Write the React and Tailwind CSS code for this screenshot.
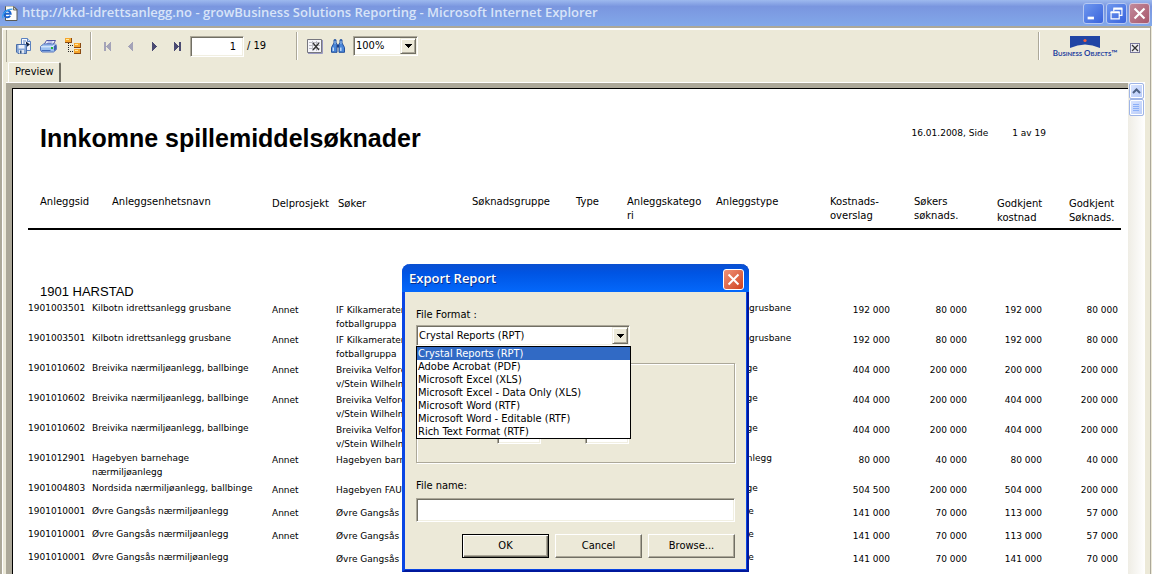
import { useState } from "react"

const formats = [
  "Crystal Reports (RPT)",
  "Adobe Acrobat (PDF)",
  "Microsoft Excel (XLS)",
  "Microsoft Excel - Data Only (XLS)",
  "Microsoft Word (RTF)",
  "Microsoft Word - Editable (RTF)",
  "Rich Text Format (RTF)",
]

const velforening = ["Breivika Velforening", "v/Stein Wilhelmsen"]

const tallRows = [
  ["1901003501", ["Kilbotn idrettsanlegg grusbane"], "Annet", ["IF Kilkameratene", "fotballgruppa"], "Fotball grusbane", "192 000", "80 000", "192 000", "80 000"],
  ["1901003501", ["Kilbotn idrettsanlegg grusbane"], "Annet", ["IF Kilkameratene", "fotballgruppa"], "Fotball grusbane", "192 000", "80 000", "192 000", "80 000"],
  ["1901010602", ["Breivika nærmiljøanlegg, ballbinge"], "Annet", velforening, "Ballbinge", "404 000", "200 000", "200 000", "200 000"],
  ["1901010602", ["Breivika nærmiljøanlegg, ballbinge"], "Annet", velforening, "Ballbinge", "404 000", "200 000", "404 000", "200 000"],
  ["1901010602", ["Breivika nærmiljøanlegg, ballbinge"], "", velforening, "Ballbinge", "404 000", "200 000", "404 000", "200 000"],
  ["1901012901", ["Hagebyen barnehage", "nærmiljøanlegg"], "Annet", ["Hagebyen barnehage"], "Skateanlegg", "80 000", "40 000", "80 000", "40 000"],
]

const shortRows = [
  ["1901004803", ["Nordsida nærmiljøanlegg, ballbinge"], "Annet", ["Hagebyen FAU"], "Ballbinge", "504 500", "200 000", "504 000", "200 000"],
  ["1901010001", ["Øvre Gangsås nærmiljøanlegg"], "Annet", ["Øvre Gangsås"], "Balløkke", "141 000", "70 000", "113 000", "57 000"],
  ["1901010001", ["Øvre Gangsås nærmiljøanlegg"], "Annet", ["Øvre Gangsås"], "Balløkke", "141 000", "70 000", "113 000", "57 000"],
  ["1901010001", ["Øvre Gangsås nærmiljøanlegg"], "", ["Øvre Gangsås"], "Balløkke", "141 000", "70 000", "141 000", "70 000"],
]

const sunken =
  "border border-t-[#aca899] border-l-[#aca899] border-r-white border-b-white bg-white " +
  "shadow-[inset_1px_1px_0_#716f64,inset_-1px_-1px_0_#f1efe2] outline-none "

function PageIcon() {
  return (
    <svg viewBox="0 0 16 17" width="16" height="17" aria-hidden="true">
      <path d="M3.500 1.500h8.500l3 3v11h-11.500z" fill="#fdfdfb" stroke="#5a5a55" />
      <path d="M4 1.500h8" stroke="#c4c4b4" />
      <path d="M11.500 1.500v3.500h3.500z" fill="#cfcfc6" stroke="#55554f" strokeWidth=".8" />
      <path d="M2.500 8.700h6.200a3.300 3.300 0 1 0-.5 2" fill="none" stroke="#1a63d0" strokeWidth="1.900" />
      <path d="M1.200 13.200C-1 10 4 4 10.500 4.200" fill="none" stroke="#38a0f4" strokeWidth="1.200" />
    </svg>
  )
}

function ExportIcon() {
  return (
    <svg viewBox="0 0 16 16" width="16" height="16" aria-hidden="true">
      <path d="M5.500.5h6l3 3v9h-9z" fill="#f4f7fd" stroke="#5b82c0" />
      <path d="M11.500.5v3h3" fill="#cfe0f7" stroke="#5b82c0" />
      <path d="M7 3h3M7 5h2" stroke="#5b82c0" />
      <path d="M10 3.500l4 3-4 3z" fill="#14233f" />
      <path d="M.5 6.500h10v9H2l-1.500-1.500z" fill="#86a6d6" stroke="#4a6ea8" />
      <path d="M2.500 7h6v3.500h-6z" fill="#eef3fb" />
      <path d="M3 12h5v3.500H3z" fill="#dfe6f0" />
      <path d="M4 12.500h1.500v3H4z" fill="#30517f" />
    </svg>
  )
}

function PrintIcon() {
  return (
    <svg viewBox="0 0 17 14" width="17" height="14" aria-hidden="true">
      <path d="M6.500 1.500h9l-3 5h-9z" fill="#f8faff" stroke="#4c4fa3" />
      <path d="M7.500 3h5M6.500 4.500h5" stroke="#7c86d0" />
      <path d="M.5 7.500L3.500 5h12l1 1.500v4l-3 2.500H2L.5 11.500z" fill="#9cc0f0" stroke="#5b79bd" />
      <path d="M1 7.800h11l3.500-2.300" fill="none" stroke="#e9f3ff" />
      <path d="M1.500 11.500h9" stroke="#3e68b8" />
      <path d="M11 8h2v2h-2z" fill="#24b53b" />
      <path d="M14 7l2-1.500v5L14 12z" fill="#3f5fae" />
    </svg>
  )
}

function TreeNode({ x, y }) {
  return (
    <g>
      <path d={`M${x} ${y}h7v5h-7z`} fill="#8a4a12" />
      <path d={`M${x} ${y}h6v4h-6z`} fill="#f6a62c" />
      <path d={`M${x + 1} ${y + 1}h3v1h-3z`} fill="#ffe9a0" />
    </g>
  )
}

function TreeIcon() {
  return (
    <svg viewBox="0 0 16 16" width="16" height="16" shapeRendering="crispEdges" aria-hidden="true">
      <path d="M3.500 5v10M3 7.500h6M3 13.500h6" fill="none" stroke="#222" strokeDasharray="1 1" />
      <TreeNode x={0} y={0} />
      <TreeNode x={9} y={5} />
      <TreeNode x={9} y={11} />
    </svg>
  )
}

function NavButton({ label, path, muted }) {
  return (
    <button type="button" aria-label={label} className={muted ? "text-[#a4a3b8]" : "text-[#4b4b72]"}>
      <svg viewBox="0 0 8 9" width="8" height="9" fill="currentColor" shapeRendering="crispEdges" aria-hidden="true">
        <path d={path} />
      </svg>
    </button>
  )
}

function StopIcon() {
  return (
    <svg viewBox="0 0 16 15" width="16" height="15" aria-hidden="true">
      <path d="M15.500 1v13.500H1" fill="none" stroke="#9a9ac4" />
      <path d="M.5.5h14v13H.5z" fill="#f6f6fa" stroke="#77777f" />
      <path d="M2 3.500h11M2 6.500h11M2 9.500h11M5.500 2v10M9.500 2v10" stroke="#bdbdc6" />
      <path d="M6 4l6 7M12 4l-6 7" stroke="#333" strokeWidth="1.300" />
    </svg>
  )
}

function FindIcon() {
  return (
    <svg viewBox="0 0 14 14" width="14" height="14" aria-hidden="true">
      <path d="M3 .8h2v2.500l1 2v8H.5V8.500L3 4zM9 .8h2V4l2.500 4.500v4.800H8v-8l1-2z" fill="#4a86d8" stroke="#234f9c" />
      <path d="M6 5.500h2v3H6z" fill="#1c3f86" />
      <path d="M2.300 8.500v3.500M9.800 8.500v3.500" stroke="#c4dcf8" strokeWidth="1.400" />
      <path d="M4 2v3M10 2v3" stroke="#9cc4f2" />
    </svg>
  )
}

function ArrowDown() {
  return (
    <svg viewBox="0 0 7 4" width="7" height="4" shapeRendering="crispEdges" aria-hidden="true">
      <path d="M0 0h7L3.500 4z" fill="#000" />
    </svg>
  )
}

function Combo({ className, ...props }) {
  return (
    <span className={"relative block " + className}>
      <select {...props} className={sunken + "h-full w-full appearance-none px-0.5 leading-4"} />
      <span className="pointer-events-none absolute top-0.5 right-0.5 bottom-0.5 flex w-4 items-center justify-center border border-t-[#f1efe2] border-l-[#f1efe2] border-r-[#716f64] border-b-[#716f64] bg-[#ece9d8] shadow-[inset_1px_1px_0_#fff,inset_-1px_-1px_0_#aca899]">
        <ArrowDown />
      </span>
    </span>
  )
}

function WindowButton({ label, className, children }) {
  return (
    <button
      type="button"
      aria-label={label}
      className={"flex size-[21px] items-center justify-center rounded-[3px] border text-white " + className}
    >
      <svg viewBox="0 0 21 21" width="19" height="19" fill="none" stroke="currentColor" aria-hidden="true">
        {children}
      </svg>
    </button>
  )
}

function TitleBar() {
  const blue = "border-[#b5c8f2] bg-linear-to-br from-[#6f97ee] to-[#3a62dc]"
  return (
    <header className="flex h-[26px] items-center bg-linear-to-b from-[#9db9ee] via-[#7a96df] via-25% to-[#82a8ea] pl-0.5">
      <PageIcon />
      <h1 className="ml-1 flex-1 truncate font-['Open_Sans'] text-[13px] font-semibold text-[#d8e4f8]">
        http://kkd-idrettsanlegg.no - growBusiness Solutions Reporting - Microsoft Internet Explorer
      </h1>
      <div className="flex gap-0.5 pr-0.5">
        <WindowButton label="Minimize" className={blue}>
          <path d="M4 15.500h7" strokeWidth="3" />
        </WindowButton>
        <WindowButton label="Restore" className={blue}>
          <path d="M7.500 8V5.500h9v7H14M4.500 9.500h9v7h-9z" strokeWidth="1.300" />
          <path d="M7 5h10M4 9h10" strokeWidth="2" />
        </WindowButton>
        <WindowButton label="Close" className="border-[#d3c5dc] bg-linear-to-br from-[#c28a9c] to-[#a8576b]">
          <path d="M5 5l11 11M16 5L5 16" strokeWidth="2.400" />
        </WindowButton>
      </div>
    </header>
  )
}

function Separator() {
  return <span className="h-7 w-0.5 border-l border-[#aca899] bg-white" />
}

function Toolbar() {
  return (
    <div className="flex h-8 items-center border-l border-[#aca899] pl-[9px]">
      <div className="flex w-[74px] items-center gap-2">
        <button type="button" aria-label="Export"><ExportIcon /></button>
        <button type="button" aria-label="Print"><PrintIcon /></button>
        <button type="button" aria-label="Group tree"><TreeIcon /></button>
      </div>
      <Separator />
      <div className="ml-3 flex items-center gap-[15px]">
        <NavButton label="First page" muted path="M0 0h2v9H0zM7 0v9L2 4.500z" />
        <NavButton label="Previous page" muted path="M6 0v9L1 4.500z" />
        <NavButton label="Next page" path="M2 0v9l5-4.500z" />
        <NavButton label="Last page" path="M1 0v9l5-4.500zM6 0h2v9H6z" />
      </div>
      <input aria-label="Page number" defaultValue="1" className={sunken + "ml-[9px] h-[21px] w-[54px] pr-[7px] text-right"} />
      <span className="ml-[3px] w-[49px]">/ 19</span>
      <Separator />
      <div className="ml-[9px] flex items-center gap-2">
        <button type="button" aria-label="Stop loading"><StopIcon /></button>
        <button type="button" aria-label="Search"><FindIcon /></button>
        <Combo aria-label="Zoom" className="h-5 w-[65px]" defaultValue="100%">
          <option>100%</option>
          <option>200%</option>
        </Combo>
      </div>
      <div className="ml-auto flex items-center">
        <Separator />
        <div className="ml-3 flex w-[66px] flex-col items-center pt-0.5 text-[#1f3f9f]">
          <svg viewBox="0 0 30 12" width="30" height="12" aria-hidden="true">
            <path d="M0 0h30v12Q15 5 0 12z" fill="#2145a5" />
            <circle cx="15" cy="4.500" r="1.600" fill="#f0603c" />
          </svg>
          <span className="font-[Lato] text-[8px] leading-[10px] font-bold whitespace-nowrap [font-variant:small-caps]">Business Objects™</span>
        </div>
        <button type="button" aria-label="Close view" className="mt-1 mr-[5px] ml-3 border border-[#77779a] bg-[#eeedf2]">
          <svg viewBox="0 0 8 8" width="8" height="8" aria-hidden="true">
            <path d="M1 1l6 6M7 1L1 7" stroke="#333" strokeWidth="1.300" />
          </svg>
        </button>
      </div>
    </div>
  )
}

function ReportRow({ row, height }) {
  const [id, name, part, applicant, type, ...amounts] = row
  return (
    <tr className={height}>
      <td>{id}</td>
      <td>{name.map((line) => <div key={line}>{line}</div>)}</td>
      <td className="pt-0.5">{part}</td>
      <td className="pt-0.5">{applicant.map((line) => <div key={line}>{line}</div>)}</td>
      <td colSpan={3} />
      <td>{type}</td>
      {amounts.map((amount, index) => (
        <td key={index} className={index === 3 ? "pt-0.5 pr-[3px] text-right" : "pt-0.5 text-right"}>
          {amount}
        </td>
      ))}
    </tr>
  )
}

function Report() {
  return (
    <article className="flex-1 overflow-hidden border-t border-l border-black bg-white pt-[33px] pr-[7px] pl-[15px] font-['DejaVu_Sans'] text-[9px] leading-[14px] whitespace-nowrap">
      <div className="flex justify-between pr-[75px] pl-3">
        <h2 className="font-['Liberation_Sans'] text-[25px] leading-8 font-bold">Innkomne spillemiddelsøknader</h2>
        <p className="flex gap-6 pt-1">
          <span>16.01.2008, Side</span>
          <span>1 av 19</span>
        </p>
      </div>
      <table className="mt-[41px] w-full table-fixed border-collapse text-left align-top [&_td]:align-top [&_th]:align-top [&_th]:font-normal">
        <colgroup>
          <col className="w-16" />
          <col className="w-[180px]" />
          <col className="w-16" />
          <col className="w-[136px]" />
          <col className="w-[104px]" />
          <col className="w-[51px]" />
          <col className="w-[89px]" />
          <col />
          <col className="w-16" />
          <col className="w-[77px]" />
          <col className="w-[75px]" />
          <col className="w-[79px]" />
        </colgroup>
        <thead className="border-b-2 border-black text-[10px]">
          <tr className="h-[34px]">
            <th className="pl-3">Anleggsid</th>
            <th className="pl-5">Anleggsenhetsnavn</th>
            <th className="pt-0.5">Delprosjekt</th>
            <th className="pt-0.5 pl-0.5">Søker</th>
            <th>Søknadsgruppe</th>
            <th>Type</th>
            <th>Anleggskatego<br />ri</th>
            <th>Anleggstype</th>
            <th className="pl-1">Kostnads-<br />overslag</th>
            <th className="pl-6">Søkers<br />søknads.</th>
            <th className="pt-0.5 pl-[30px]">Godkjent<br />kostnad</th>
            <th className="pt-0.5 pl-[27px]">Godkjent<br />Søknads.</th>
          </tr>
        </thead>
        <tbody>
          <tr className="h-[71px]">
            <th colSpan={12} className="pt-[53px] pl-3 font-['Liberation_Sans'] text-[13px] leading-[18px]">1901 HARSTAD</th>
          </tr>
          {tallRows.map((row, index) => <ReportRow key={index} row={row} height="h-[30px]" />)}
          {shortRows.map((row, index) => <ReportRow key={index} row={row} height="h-[23px]" />)}
        </tbody>
      </table>
    </article>
  )
}

function ScrollBar() {
  const button = "flex w-full items-center justify-center rounded-[2px] border border-[#9fb5e6] bg-linear-to-br from-[#dbe6ff] to-[#b8cbf8] shadow-[inset_0_0_0_1px_#fff]"
  return (
    <div className="flex w-[17px] flex-col bg-linear-to-r from-[#efede5] to-white px-px">
      <button type="button" aria-label="Scroll up" className={button + " h-4"}>
        <svg viewBox="0 0 9 6" width="9" height="6" fill="none" aria-hidden="true">
          <path d="M1 5l3.500-3.500L8 5" stroke="#4d6185" strokeWidth="2" />
        </svg>
      </button>
      <button type="button" aria-label="Scroll position" className={button + " h-[17px]"}>
        <svg viewBox="0 0 7 8" width="7" height="8" aria-hidden="true">
          <path d="M0 .5h6M0 2.500h6M0 4.500h6M0 6.500h6" stroke="#8cb0f8" />
        </svg>
      </button>
    </div>
  )
}

function DialogButton({ primary, children }) {
  return (
    <button
      type="button"
      className={
        "h-6 flex-1 border bg-[#ece9d8] " +
        (primary
          ? "border-black shadow-[inset_1px_1px_0_#fff,inset_-1px_-1px_0_#716f64,inset_-2px_-2px_0_#aca899]"
          : "border-t-white border-l-white border-r-[#716f64] border-b-[#716f64] shadow-[inset_-1px_-1px_0_#aca899]")
      }
    >
      {children}
    </button>
  )
}

function ExportDialog() {
  const [format, setFormat] = useState(formats[0])
  const [fileName, setFileName] = useState("")
  return (
    <section
      role="dialog"
      aria-label="Export Report"
      className="absolute top-[264px] left-[402px] w-[347px] rounded-t-lg border-r-2 border-b-2 border-l-[3px] border-r-[#00189c] border-b-[#00189c] border-l-[#0a46e4] bg-[#ece9d8] shadow-[inset_-1px_-1px_0_#0a46e4]"
    >
      <header className="-mr-0.5 -ml-[3px] flex h-7 items-center justify-between rounded-t-lg bg-linear-to-b from-[#0a4fd0] via-[#0054e3] via-30% to-[#0468fb] pt-0.5 pr-[5px] pl-[7px]">
        <h2 className="font-['Open_Sans'] text-[13px] font-semibold text-white [text-shadow:1px_1px_0_#0b2f8a]">Export Report</h2>
        <WindowButton label="Close" className="border-white bg-linear-to-br from-[#ee9278] to-[#cf3f18]">
          <path d="M5 5l11 11M16 5L5 16" strokeWidth="2.200" />
        </WindowButton>
      </header>
      <div className="pt-[13px] pr-3 pb-3 pl-[11px]">
        <label htmlFor="format" className="block leading-5">File Format :</label>
        <div className="relative w-[214px]">
          <Combo id="format" className="h-[21px]" value={format} onChange={(e) => setFormat(e.target.value)}>
            {formats.map((name) => <option key={name}>{name}</option>)}
          </Combo>
          <ul role="listbox" aria-label="File formats" className="absolute top-full left-0 z-10 w-[215px] border border-black bg-white leading-[13px]">
            {formats.map((name) => (
              <li
                key={name}
                role="option"
                aria-selected={name === format}
                onClick={() => setFormat(name)}
                className={name === format ? "bg-[#316ac5] pl-px text-white" : "pl-px"}
              >
                {name}
              </li>
            ))}
          </ul>
        </div>
        <fieldset className="mt-[17px] flex h-[100px] items-end gap-11 border border-[#aca899] pb-[18px] pl-20 shadow-[1px_1px_0_#fff,inset_1px_1px_0_#fff]">
          <input aria-label="From page" className={sunken + "h-5 w-11"} />
          <input aria-label="To page" className={sunken + "h-5 w-11"} />
        </fieldset>
        <label htmlFor="file-name" className="mt-[13px] block leading-5">File name:</label>
        <input
          id="file-name"
          value={fileName}
          onChange={(e) => setFileName(e.target.value)}
          className={sunken + "mt-0.5 block h-6 w-full px-1"}
        />
        <div className="mt-3 flex gap-1.5 pl-[46px]">
          <DialogButton primary>OK</DialogButton>
          <DialogButton>Cancel</DialogButton>
          <DialogButton>Browse...</DialogButton>
        </div>
      </div>
    </section>
  )
}

export default function App() {
  return (
    <div className="relative flex h-screen flex-col overflow-hidden bg-[#ece9d8] font-['DejaVu_Sans_Condensed','DejaVu_Sans',sans-serif] text-[11px] text-black">
      <TitleBar />
      <main className="mr-px flex min-h-0 flex-1 flex-col border-t-2 border-r border-l-2 border-[#aca899]">
        <div className="flex min-h-0 flex-1 flex-col border-t-2 border-l border-white pr-[5px] pl-[3px]">
          <Toolbar />
          <div className="flex h-[21px] border-b border-white pl-0.5">
            <button type="button" className="rounded-t-[2px] border-t border-r-2 border-l border-t-white border-r-[#716f64] border-l-white px-1.5">
              Preview
            </button>
          </div>
          <div className="flex min-h-0 flex-1">
            <div className="flex min-w-0 flex-1 bg-[#aca899] pt-[5px] pl-1.5">
              <Report />
            </div>
            <ScrollBar />
          </div>
        </div>
      </main>
      <ExportDialog />
    </div>
  )
}
